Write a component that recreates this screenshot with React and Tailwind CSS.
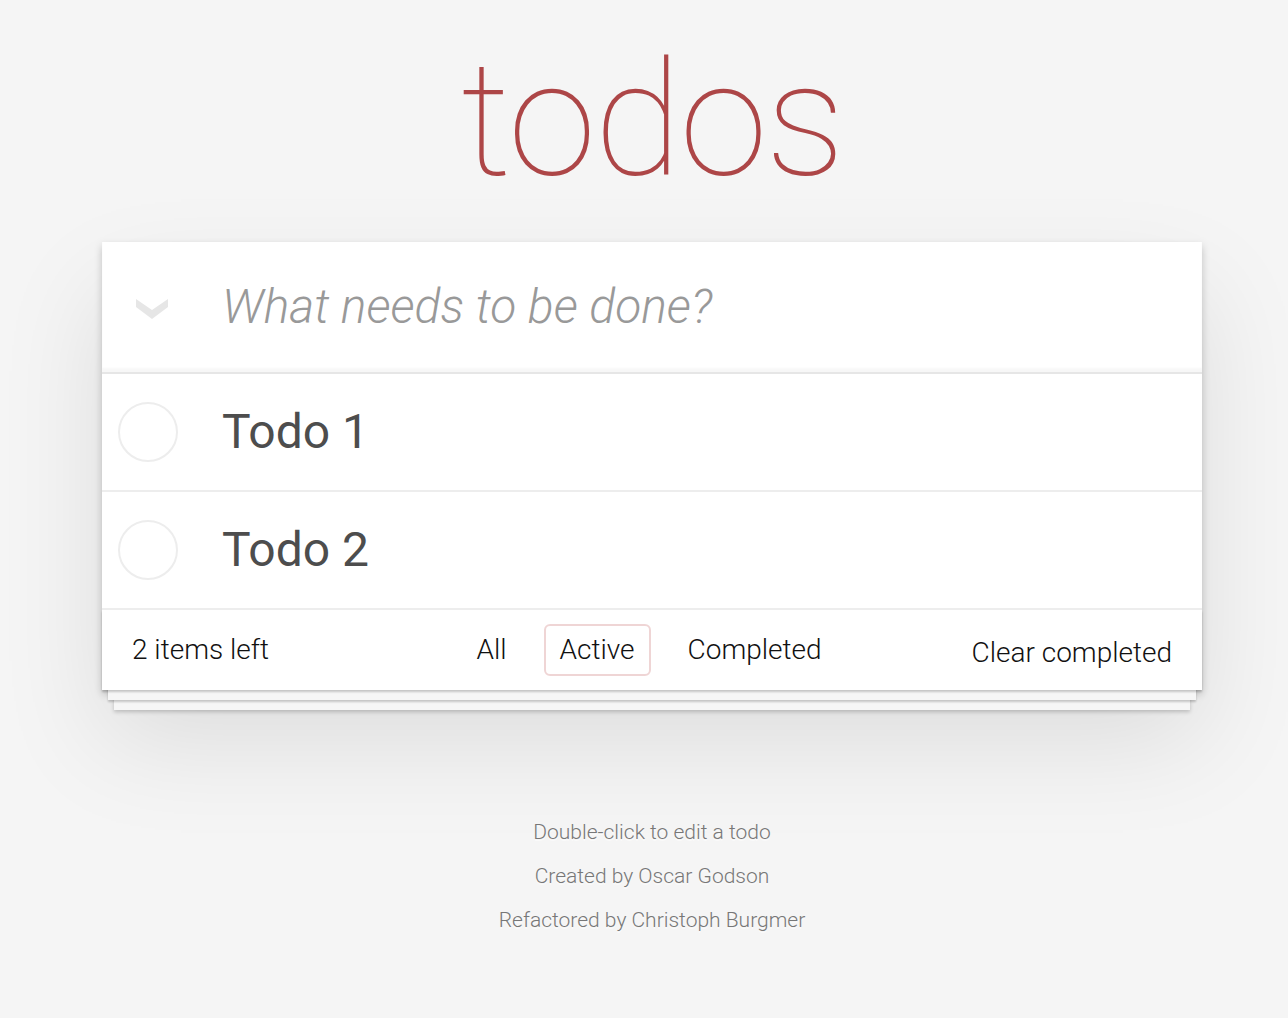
import { useState } from 'react'

const FONT = 'font-["Roboto","Liberation_Sans",sans-serif]'

const TODOS = [
  { id: 1, title: 'Todo 1' },
  { id: 2, title: 'Todo 2' },
]

const FILTERS = ['All', 'Active', 'Completed']

function Chevron() {
  return (
    <svg width="32" height="21" viewBox="0 0 32 21">
      <polygon points="0,0 16,11 32,0 32,8 16,20 0,8" fill="#e6e6e6" />
    </svg>
  )
}

export default function App() {
  const [filter, setFilter] = useState('Active')

  return (
    <div className={`min-h-screen bg-[#f5f5f5] ${FONT} font-light text-[#111] flex flex-col items-center pl-[16px]`}>
      {/* Title */}
      <h1 className="mt-[24px] h-[218px] text-[160px] leading-[192px] font-thin tracking-[-2px] text-[#ad4647] text-center">
        todos
      </h1>

      {/* App card */}
      <section className="w-[1100px] bg-white shadow-[0_4px_8px_0_rgba(0,0,0,0.2),0_50px_100px_0_rgba(0,0,0,0.1)]">
        <header className="h-[130px] flex items-center shadow-[inset_0_-4px_2px_rgba(0,0,0,0.03)]">
          <div className="w-[100px] flex justify-center pt-[4px]">
            <Chevron />
          </div>
          <input
            className="ml-[20px] flex-1 outline-none bg-transparent text-[48px] text-[#4d4d4d] placeholder:italic placeholder:text-[#999] placeholder:font-light"
            placeholder="What needs to be done?"
          />
        </header>

        <ul className="border-t-2 border-[#e6e6e6]">
          {TODOS.map((t) => (
            <li key={t.id} className="h-[118px] flex items-center border-b-2 border-[#ededed]">
              <div className="w-[120px] pl-[16px]">
                <div className="w-[60px] h-[60px] rounded-full border-2 border-[#ededed]" />
              </div>
              <span className="text-[48px] text-[#4d4d4d] font-normal">{t.title}</span>
            </li>
          ))}
        </ul>

        <footer className="relative h-[80px] px-[30px] grid grid-cols-[1fr_auto_1fr] items-center text-[28px]">
          {/* stacked paper edges under the card */}
          <div className="absolute inset-0 pointer-events-none shadow-[0_2px_2px_rgba(0,0,0,0.2),0_16px_0_-6px_#f6f6f6,0_18px_2px_-6px_rgba(0,0,0,0.2),0_32px_0_-12px_#f6f6f6,0_34px_4px_-12px_rgba(0,0,0,0.2)]" />
          <span className="relative">2 items left</span>
          <ul className="relative flex gap-[21px] -ml-[6px]">
            {FILTERS.map((f) => (
              <li key={f}>
                <button
                  onClick={() => setFilter(f)}
                  className={`px-[14px] h-[52px] leading-[48px] rounded-[6px] border-2 ${
                    f === filter ? 'border-[rgba(175,47,47,0.2)]' : 'border-transparent'
                  }`}
                >
                  {f}
                </button>
              </li>
            ))}
          </ul>
          <button className="relative justify-self-end pt-[6px]">Clear completed</button>
        </footer>
      </section>

      {/* Info */}
      <footer className="mt-[131px] flex flex-col items-center gap-[22px] text-[21px] leading-[22px] text-[#777] [text-shadow:0_2px_0_rgba(255,255,255,0.5)]">
        <p>Double-click to edit a todo</p>
        <p>Created by Oscar Godson</p>
        <p>Refactored by Christoph Burgmer</p>
      </footer>
    </div>
  )
}
